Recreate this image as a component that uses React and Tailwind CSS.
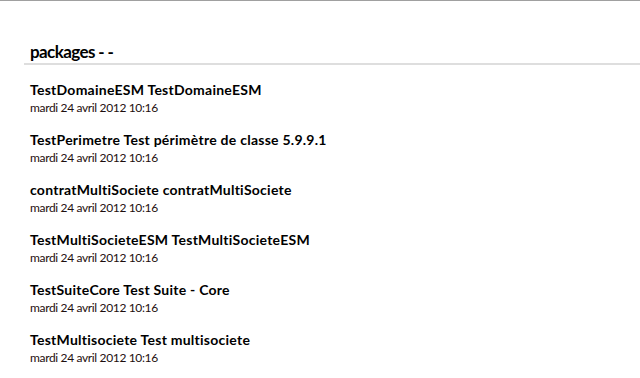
const packages = [
  'TestDomaineESM TestDomaineESM',
  'TestPerimetre Test périmètre de classe 5.9.9.1',
  'contratMultiSociete contratMultiSociete',
  'TestMultiSocieteESM TestMultiSocieteESM',
  'TestSuiteCore Test Suite - Core',
  'TestMultisociete Test multisociete',
]

export default function App() {
  return (
    <div className="h-[378px] w-[640px] overflow-hidden border-t border-[#a0a0a0] bg-white font-['Lato',sans-serif] text-black [font-variant-ligatures:none]">
      <div className="ml-6 mt-[40px] border-b-2 border-[#dedede] pl-1.5">
        <h1 className="text-[17px] font-bold leading-[22px] tracking-[-0.6px]">packages - -</h1>
      </div>
      <ul className="mt-[15px] pl-[30px]">
        {packages.map((name) => (
          <li key={name} className="mb-[13px] h-[37px]">
            <div className="text-[14px] font-bold leading-[19px] tracking-[0.25px]">{name}</div>
            <div className="text-[12px] leading-[17px] tracking-[-0.35px] text-[#1e0e0e]">mardi 24 avril 2012 10:16</div>
          </li>
        ))}
      </ul>
    </div>
  )
}
